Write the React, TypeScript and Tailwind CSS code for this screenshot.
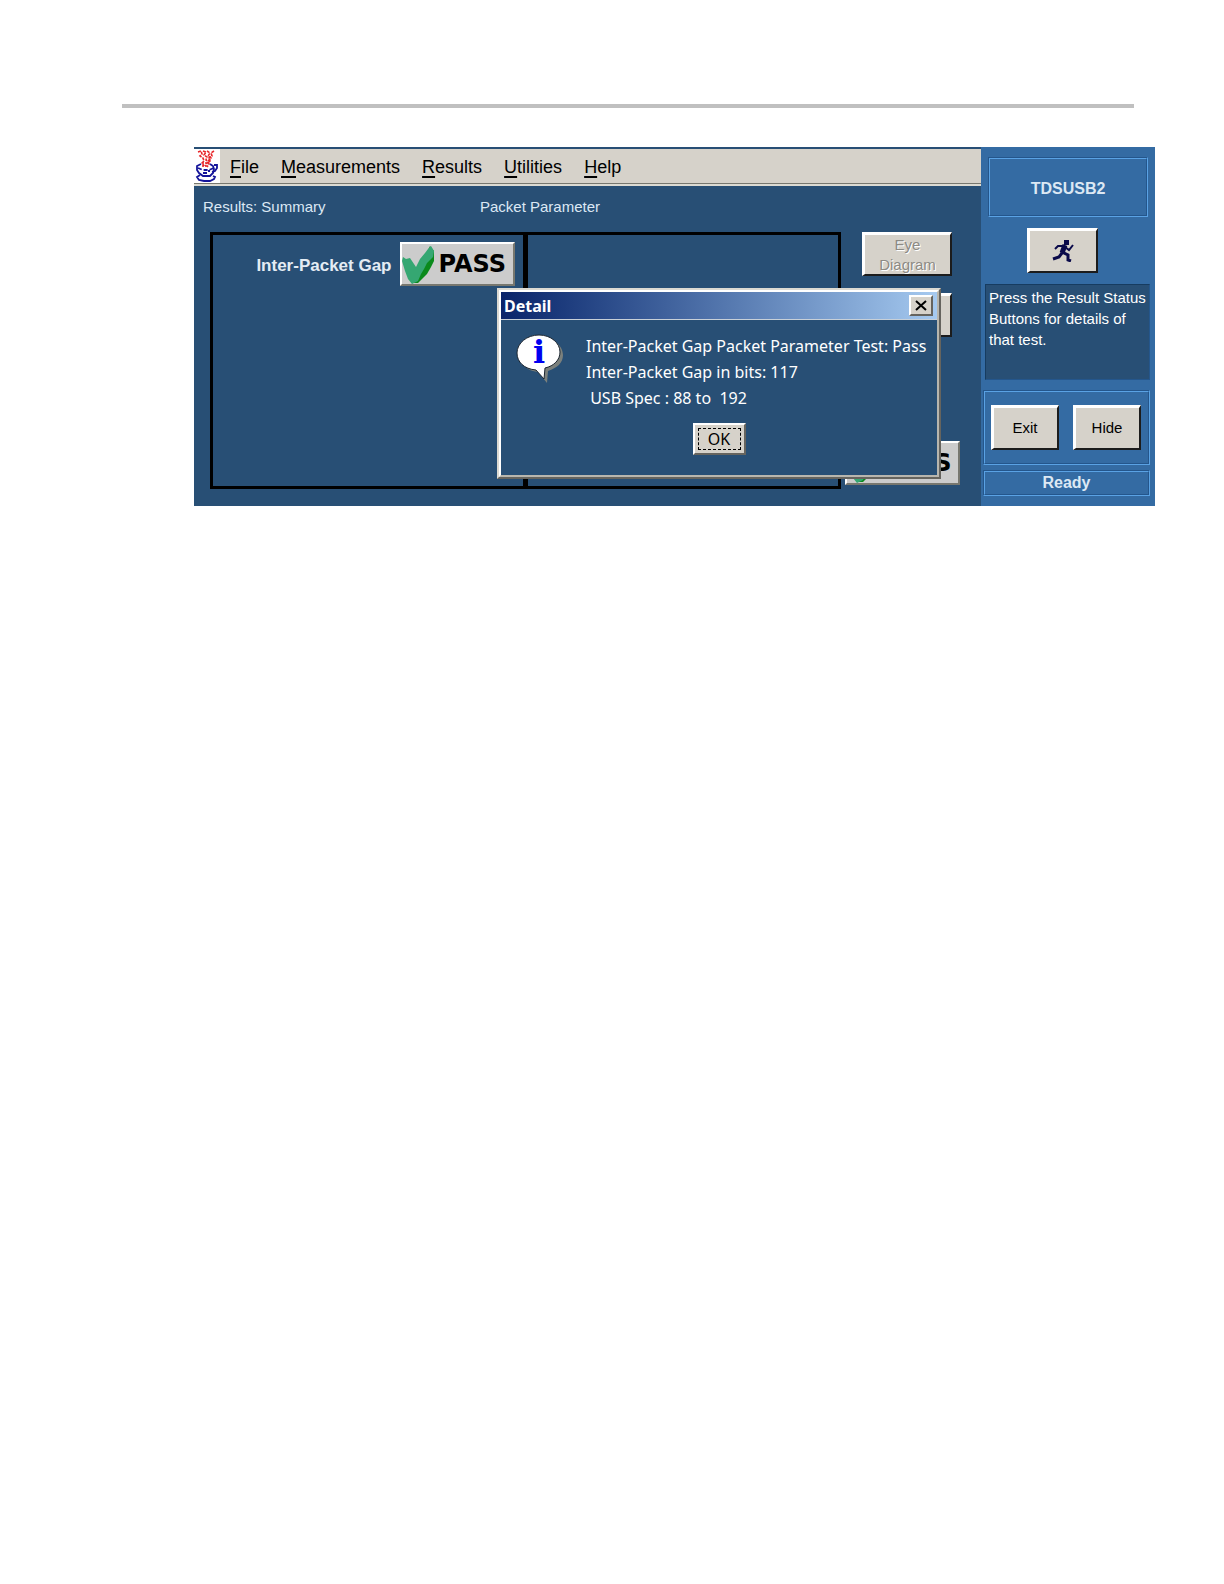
import React from 'react';

interface PanelButtonProps {
    children: React.ReactNode;
    className?: string;
    disabled?: boolean;
    label?: string;
}

const menuItems = ['File', 'Measurements', 'Results', 'Utilities', 'Help'];

const JavaIcon = () => (
    <svg width="26" height="34" viewBox="0 0 26 34" fill="none" className="shrink-0 bg-white">
        <g stroke="#e8262a" strokeWidth="1.6">
            <path d="M4 3l3-1 1 3-2 2 3 2 1 3-2 2 2 3" strokeDasharray="3 1" />
            <path d="M9 2l3 1-2 3 3 2-1 3 2 2-3 4" strokeDasharray="3 1" />
            <path d="M13 2l3 2-2 3 3 2-3 3 1 3-2 3" strokeDasharray="3 1" />
            <path d="M20 2l-3 2 1 3-3 2 1 3-2 2" strokeDasharray="3 1" />
            <path d="M8 14h7M8 17h6" strokeDasharray="2 1" />
        </g>
        <g stroke="#14149a" strokeWidth="1.800">
            <path d="M7 15l-4 2v4l2 3 4 3h7l3-3 1-4-1-3-3-2" />
            <path d="M20 16h3v3l-2 3-3 1" />
            <path d="M4 19l5 2h6l5-2" strokeDasharray="4 2" />
            <path d="M9 24h4M14 22h2" />
            <path d="M6 26l-3 2 2 3 5 1h6l4-2 1-2-2-1" />
        </g>
    </svg>
);

const CheckIcon = () => (
    <svg width="33" height="39" viewBox="0 0 33 39" className="shrink-0">
        <path d="M28 1l4 5v10l-3 6-4 7-5 5-4 4h-7z" fill="#0b8a1c" />
        <path d="M0 16l1-4 3 2 4-1 4 6 2 3 4-8 5-6 3-4 3-3 3 5-1 6-6 6-3 6-3 5-3 7-6 3-4-5-3-8z" fill="#35a772" />
    </svg>
);

const RunnerIcon = () => (
    <svg width="22" height="22" viewBox="0 0 22 22" fill="none" stroke="#0a0a4a">
        <rect x="12" y="0" width="5" height="5" fill="#0a0a4a" stroke="none" />
        <path d="M13 5l-3 8" strokeWidth="5" />
        <path d="M13 6H6L3 9M13 7l4 3 4-5" strokeWidth="2" />
        <path d="M10 12l6 3v5l3 1M10 13l-3 4-6 2" strokeWidth="3" />
    </svg>
);

const InfoIcon = () => (
    <svg width="52" height="52" viewBox="0 0 52 52" className="shrink-0">
        <path d="M27 5c12 0 21 8 21 17 0 8-6 13-15 16l-1 12-9-11C12 38 5 31 5 22 5 13 15 5 27 5z" fill="#7b807c" />
        <path
            d="M24 2c12 0 21 8 21 17 0 8-6 14-15 16l-1 11-8-9C9 36 2 29 2 20 2 10 12 2 24 2z"
            fill="#ffffff"
            stroke="#1b2530"
        />
        <text x="24" y="30" textAnchor="middle" fontFamily="DejaVu Serif, serif" fontWeight="bold" fontSize="32" fill="#0000f0">
            i
        </text>
    </svg>
);

const PanelButton: React.FC<PanelButtonProps> = ({ children, className = '', disabled, label }) => (
    <button
        type="button"
        disabled={disabled}
        aria-label={label}
        className={`flex items-center justify-center border-t-3 border-l-3 border-r-2 border-b-2 border-t-white border-l-white border-r-[#1c1c1c] border-b-[#1c1c1c] bg-[#d6d2ca] text-[15px] leading-5 ${className}`}
    >
        {children}
    </button>
);

const PassButton = () => (
    <button
        type="button"
        className="flex h-11 w-[115px] items-center gap-1 border-2 border-t-white border-l-white border-r-[#77776f] border-b-[#77776f] bg-[#cccccc] font-['DejaVu_Sans',sans-serif] text-2xl font-bold text-black"
    >
        <CheckIcon />
        PASS
    </button>
);

// 1px dark line with a light line inside it
const EtchedBox: React.FC<{ children: React.ReactNode; className?: string }> = ({ children, className = '' }) => (
    <div className={`border border-t-[#24568c] border-l-[#24568c] border-r-[#5aa2e4] border-b-[#5aa2e4] ${className}`}>
        <div className="flex h-full items-center justify-center border border-t-[#5aa2e4] border-l-[#5aa2e4] border-r-[#24568c] border-b-[#24568c]">
            {children}
        </div>
    </div>
);

const MenuBar = () => (
    <div className="border-b-2 border-[#dcdad2]">
        <nav className="flex items-center border-b border-[#77776f] bg-[#d6d2ca]">
            <JavaIcon />
            <div className="flex gap-[22px] pt-[2px] pl-[10px]">
                {menuItems.map(item => (
                    <button key={item} type="button" className="text-lg leading-6 text-black">
                        <span className="underline decoration-2 underline-offset-3">{item[0]}</span>
                        {item.slice(1)}
                    </button>
                ))}
            </div>
        </nav>
    </div>
);

const ResultsArea = () => (
    <div className="flex pl-4">
        <div className="flex h-[257px] flex-1 border-3 border-black">
            <div className="flex w-1/2 items-start justify-end border-r-3 border-black pt-[7px] pr-2">
                <div className="flex items-center gap-2">
                    <span className="pt-1 text-[17px] font-bold text-[#e4ecf4]">Inter-Packet Gap</span>
                    <PassButton />
                </div>
            </div>
            <div className="w-1/2 border-l-2 border-black" />
        </div>
        <div className="flex w-[140px] flex-col pl-1">
            <PanelButton disabled className="ml-[17px] h-11 w-[90px] text-[#8c8a84]">
                <span className="[text-shadow:1px_1px_0_#ffffff]">
                    Eye
                    <br />
                    Diagram
                </span>
            </PanelButton>
            <PanelButton disabled label="Signal" className="mt-[17px] ml-[17px] h-11 w-[90px]">
                {null}
            </PanelButton>
            <div className="mt-auto mb-1">
                <PassButton />
            </div>
        </div>
    </div>
);

const Sidebar = () => (
    <aside className="flex w-[174px] shrink-0 flex-col bg-[#346ba3] pt-[10px] pr-[5px] pb-[10px]">
        <EtchedBox className="mr-[2px] ml-[7px] h-[60px]">
            <h1 className="pt-1 text-base font-bold text-[#dce8f4]">TDSUSB2</h1>
        </EtchedBox>
        <PanelButton label="Run" className="mt-[11px] ml-[46px] h-[45px] w-[71px]">
            <RunnerIcon />
        </PanelButton>
        <p className="mt-[11px] ml-1 h-[96px] border border-t-[#173c60] border-l-[#173c60] border-r-[#24568c] border-b-[#24568c] bg-[#284f75] pt-[2px] pl-[3px] text-[15px] leading-[21px] whitespace-nowrap text-white">
            Press the Result Status
            <br />
            Buttons for details of
            <br />
            that test.
        </p>
        <EtchedBox className="mt-[10px] ml-[2px] h-[75px]">
            <div className="flex gap-[14px] pr-[2px]">
                <PanelButton className="h-[45px] w-[68px] text-black">Exit</PanelButton>
                <PanelButton className="h-[45px] w-[68px] text-black">Hide</PanelButton>
            </div>
        </EtchedBox>
        <EtchedBox className="mt-[5px] ml-[2px] h-[26px]">
            <span className="text-base font-bold text-[#dce8f4]">Ready</span>
        </EtchedBox>
    </aside>
);

const DetailDialog = () => (
    <div
        role="dialog"
        aria-labelledby="detail-title"
        className="absolute top-[141px] left-[303px] w-[444px] border-2 border-t-[#dcdad2] border-l-[#dcdad2] border-r-[#66645e] border-b-[#66645e] bg-[#284f75] font-['Noto_Sans',sans-serif] text-base text-white"
    >
        <div className="border-2 border-t-white border-l-white border-r-[#b8b6ae] border-b-[#b8b6ae]">
            <div className="flex h-7 items-center justify-between border-b border-[#c8d0d8] bg-linear-to-r from-[#0a246a] to-[#a6caf0] pr-1 pl-[3px]">
                <h2 id="detail-title" className="font-bold">Detail</h2>
                <button
                    type="button"
                    aria-label="Close"
                    className="flex h-[21px] w-6 items-center justify-center border-2 border-t-white border-l-white border-r-[#66645e] border-b-[#66645e] bg-[#d6d2ca]"
                >
                    <svg width="12" height="11" viewBox="0 0 12 11" stroke="#000000" strokeWidth="2">
                        <path d="M1 1l10 9M11 1L1 10" />
                    </svg>
                </button>
            </div>
            <div className="flex gap-[19px] pt-[13px] pl-[14px]">
                <InfoIcon />
                <div className="leading-[26px] whitespace-pre">
                    <p>Inter-Packet Gap Packet Parameter Test: Pass</p>
                    <p>Inter-Packet Gap in bits: 117</p>
                    <p> USB Spec : 88 to  192</p>
                </div>
            </div>
            <div className="flex justify-center pt-3 pb-5">
                <button
                    type="button"
                    className="h-8 w-[53px] border-2 border-t-white border-l-white border-r-[#66645e] border-b-[#66645e] bg-[#d6d2ca] p-[3px] text-black"
                >
                    <span className="flex h-full items-center justify-center border border-dashed border-black">OK</span>
                </button>
            </div>
        </div>
    </div>
);

const App = () => (
    <div className="min-h-screen bg-white pt-[104px] font-['Liberation_Sans',Arial,sans-serif]">
        <hr className="mr-[90px] ml-[122px] border-t-4 border-[#c0c0c0]" />
        <main className="relative mt-[39px] mr-[69px] ml-[194px] flex">
            <section className="flex flex-1 flex-col bg-[#284f75] pt-[2px] pb-[17px]">
                <MenuBar />
                <div className="flex pt-[10px] pb-[15px] pl-[9px] text-[15px] leading-[21px] text-[#dce8f4]">
                    <h2 className="w-[277px]">Results: Summary</h2>
                    <p>Packet Parameter</p>
                </div>
                <ResultsArea />
            </section>
            <Sidebar />
            <DetailDialog />
        </main>
    </div>
);

export default App;
